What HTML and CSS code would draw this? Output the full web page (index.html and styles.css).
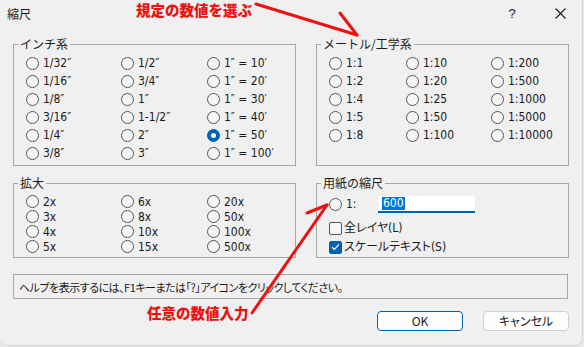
FILE: index.html
```html
<!DOCTYPE html>
<html lang="ja">
<head>
<meta charset="utf-8">
<title>縮尺</title>
<link rel="stylesheet" href="styles.css">
</head>
<body>
<div class="window">
  <div class="titlebar">
    <span class="title">縮尺</span>
    <span class="tb-help">?</span>
    <span class="tb-close"><svg width="11" height="11" viewBox="0 0 11 11"><path d="M0.5 0.5L10.5 10.5M10.5 0.5L0.5 10.5" stroke="#1a1a1a" stroke-width="1.1" fill="none"/></svg></span>
  </div>
  <div class="content">
    <div class="groups">
      <fieldset class="group">
        <legend>インチ系</legend>
        <div class="opts inch">
          <label class="opt"><span class="radio"></span><span class="lbl">1/32″</span></label>
          <label class="opt"><span class="radio"></span><span class="lbl">1/16″</span></label>
          <label class="opt"><span class="radio"></span><span class="lbl">1/8″</span></label>
          <label class="opt"><span class="radio"></span><span class="lbl">3/16″</span></label>
          <label class="opt"><span class="radio"></span><span class="lbl">1/4″</span></label>
          <label class="opt"><span class="radio"></span><span class="lbl">3/8″</span></label>
          <label class="opt"><span class="radio"></span><span class="lbl">1/2″</span></label>
          <label class="opt"><span class="radio"></span><span class="lbl">3/4″</span></label>
          <label class="opt"><span class="radio"></span><span class="lbl">1″</span></label>
          <label class="opt"><span class="radio"></span><span class="lbl">1-1/2″</span></label>
          <label class="opt"><span class="radio"></span><span class="lbl">2″</span></label>
          <label class="opt"><span class="radio"></span><span class="lbl">3″</span></label>
          <label class="opt"><span class="radio"></span><span class="lbl">1″ = 10′</span></label>
          <label class="opt"><span class="radio"></span><span class="lbl">1″ = 20′</span></label>
          <label class="opt"><span class="radio"></span><span class="lbl">1″ = 30′</span></label>
          <label class="opt"><span class="radio"></span><span class="lbl">1″ = 40′</span></label>
          <label class="opt"><span class="radio checked"></span><span class="lbl">1″ = 50′</span></label>
          <label class="opt"><span class="radio"></span><span class="lbl">1″ = 100′</span></label>
        </div>
      </fieldset>
      <fieldset class="group">
        <legend>メートル/工学系</legend>
        <div class="opts metric">
          <label class="opt"><span class="radio"></span><span class="lbl">1:1</span></label>
          <label class="opt"><span class="radio"></span><span class="lbl">1:2</span></label>
          <label class="opt"><span class="radio"></span><span class="lbl">1:4</span></label>
          <label class="opt"><span class="radio"></span><span class="lbl">1:5</span></label>
          <label class="opt"><span class="radio"></span><span class="lbl">1:8</span></label>
          <label class="opt"><span class="radio"></span><span class="lbl">1:10</span></label>
          <label class="opt"><span class="radio"></span><span class="lbl">1:20</span></label>
          <label class="opt"><span class="radio"></span><span class="lbl">1:25</span></label>
          <label class="opt"><span class="radio"></span><span class="lbl">1:50</span></label>
          <label class="opt"><span class="radio"></span><span class="lbl">1:100</span></label>
          <label class="opt"><span class="radio"></span><span class="lbl">1:200</span></label>
          <label class="opt"><span class="radio"></span><span class="lbl">1:500</span></label>
          <label class="opt"><span class="radio"></span><span class="lbl">1:1000</span></label>
          <label class="opt"><span class="radio"></span><span class="lbl">1:5000</span></label>
          <label class="opt"><span class="radio"></span><span class="lbl">1:10000</span></label>
        </div>
      </fieldset>
      <fieldset class="group">
        <legend>拡大</legend>
        <div class="opts enlarge">
          <label class="opt"><span class="radio"></span><span class="lbl">2x</span></label>
          <label class="opt"><span class="radio"></span><span class="lbl">3x</span></label>
          <label class="opt"><span class="radio"></span><span class="lbl">4x</span></label>
          <label class="opt"><span class="radio"></span><span class="lbl">5x</span></label>
          <label class="opt"><span class="radio"></span><span class="lbl">6x</span></label>
          <label class="opt"><span class="radio"></span><span class="lbl">8x</span></label>
          <label class="opt"><span class="radio"></span><span class="lbl">10x</span></label>
          <label class="opt"><span class="radio"></span><span class="lbl">15x</span></label>
          <label class="opt"><span class="radio"></span><span class="lbl">20x</span></label>
          <label class="opt"><span class="radio"></span><span class="lbl">50x</span></label>
          <label class="opt"><span class="radio"></span><span class="lbl">100x</span></label>
          <label class="opt"><span class="radio"></span><span class="lbl">500x</span></label>
        </div>
      </fieldset>
      <fieldset class="group">
        <legend>用紙の縮尺</legend>
        <div class="paper">
          <div class="paper-row">
            <label class="opt"><span class="radio"></span><span class="lbl">1:</span></label>
            <span class="field"><span class="sel">600</span></span>
          </div>
          <label class="check-row first"><span class="check"></span><span class="lbl">全レイヤ(L)</span></label>
          <label class="check-row"><span class="check checked"><svg width="9" height="8" viewBox="0 0 9 8"><path d="M1 4.2L3.4 6.5L8 1.3" stroke="#fff" stroke-width="1.2" fill="none"/></svg></span><span class="lbl">スケールテキスト(S)</span></label>
        </div>
      </fieldset>
    </div>
    <div class="helpbox">ヘルプを表示するには、F1キーまたは「?」アイコンをクリックしてください。</div>
    <div class="buttons">
      <button class="btn default">OK</button>
      <button class="btn">キャンセル</button>
    </div>
  </div>
  <div class="note note-top">規定の数値を選ぶ</div>
  <div class="note note-bottom">任意の数値入力</div>
  <svg class="arrows" width="584" height="347" viewBox="0 0 584 347">
    <g stroke="#ee1111" stroke-width="3" stroke-linecap="round" fill="none">
      <path d="M256 4L357 35"/>
      <path d="M340 13L357 35"/>
      <path d="M252 313L327 205"/>
      <path d="M307 213L327 205"/>
    </g>
  </svg>
</div>
</body>
</html>
```

FILE: styles.css
```css
* { box-sizing: border-box; }
html, body { margin: 0; padding: 0; }
body {
  width: 584px;
  height: 347px;
  background: #e9e9e9;
  font-family: "Noto Sans CJK JP", sans-serif;
  font-size: 12px;
  color: #1a1a1a;
  overflow: hidden;
}
.window {
  position: relative;
  width: 583px;
  height: 346px;
  background: #f0f0f0;
  border-bottom-right-radius: 8px;
  border-bottom-left-radius: 8px;
  border-right: 1px solid #d6d6d6;
  border-bottom: 1px solid #d6d6d6;
}
.titlebar {
  height: 30px;
  display: flex;
  align-items: center;
  padding-left: 7px;
}
.title {
  font-size: 12px;
  line-height: 14px;
  margin-top: -2px;
}
.tb-help {
  margin-left: auto;
  font-family: "Liberation Sans", sans-serif;
  font-size: 13px;
  width: 14px;
  text-align: center;
  margin-right: 36px;
  margin-top: -3px;
}
.tb-close {
  display: flex;
  width: 11px;
  height: 11px;
  margin-right: 16px;
  margin-top: -4px;
}
.content {
  padding: 7px 0 0 13px;
}
.groups {
  display: grid;
  grid-template-columns: 283px 253px;
  column-gap: 20px;
  row-gap: 10px;
}
.group {
  margin: 0;
  padding: 0;
  min-width: 0;
  border: 1px solid #a7a7a7;
}
.group legend {
  padding: 0 2px;
  margin-left: 4px;
  line-height: 14px;
  font-size: 12px;
}
.opts {
  display: grid;
  grid-auto-flow: column;
  padding: 3px 0 3px 12px;
}
.opts.inch {
  grid-template-rows: repeat(6, 18px);
  grid-template-columns: 95px 86px 1fr;
}
.opts.metric {
  grid-template-rows: repeat(5, 18px);
  grid-template-columns: 77px 85px 1fr;
}
.opts.enlarge {
  padding: 4px 0 3px 12px;
  grid-template-rows: repeat(4, 15px);
  grid-template-columns: 95px 86px 1fr;
}
.opt {
  display: flex;
  align-items: center;
  gap: 4px;
}
.lbl {
  font-family: "Liberation Sans Narrow", "DejaVu Sans Condensed", "Noto Sans CJK JP", sans-serif;
  font-size: 12px;
  line-height: 14px;
  font-feature-settings: "palt";
  white-space: pre;
}
.radio {
  width: 13px;
  height: 13px;
  border-radius: 50%;
  border: 1px solid #555;
  background: #f6f6f6;
  flex: none;
  display: flex;
  align-items: center;
  justify-content: center;
}
.radio.checked {
  background: #0063b1;
  border-color: #0063b1;
}
.radio.checked::after {
  content: "";
  width: 5px;
  height: 5px;
  border-radius: 50%;
  background: #fff;
}
.paper {
  padding: 5px 0 0 12px;
  display: flex;
  flex-direction: column;
}
.paper-row {
  display: flex;
  align-items: center;
  height: 18px;
}
.paper-row .opt {
  width: 49px;
}
.field {
  width: 97px;
  height: 17px;
  background: #fff;
  border-bottom: 2px solid #0063b1;
  padding: 1px 0 0 4px;
  display: flex;
  align-items: center;
}
.sel {
  background: #0078d7;
  color: #fff;
  font-family: "Liberation Sans Narrow", "DejaVu Sans Condensed", sans-serif;
  font-size: 12px;
  line-height: 13px;
  padding: 0 1px;
}
.check-row {
  display: flex;
  align-items: center;
  gap: 2px;
  height: 16px;
  margin-top: 3px;
}
.check-row.first { margin-top: 7px; }
.check {
  width: 13px;
  height: 13px;
  border: 1px solid #555;
  border-radius: 2px;
  background: #f6f6f6;
  flex: none;
  display: flex;
  align-items: center;
  justify-content: center;
}
.check.checked {
  background: #0063b1;
  border-color: #0063b1;
}
.helpbox {
  margin-top: 16px;
  width: 555px;
  height: 25px;
  border: 1px solid #a7a7a7;
  padding-left: 5px;
  display: flex;
  align-items: center;
  font-size: 11px;
  letter-spacing: -0.5px;
  font-feature-settings: "palt";
  white-space: nowrap;
}
.buttons {
  margin-top: 12px;
  width: 556px;
  display: flex;
  justify-content: flex-end;
  gap: 20px;
}
.btn {
  width: 86px;
  height: 20px;
  padding: 0;
  background: #fdfdfd;
  border: 1px solid #d0d0d0;
  border-radius: 4px;
  font-family: "Noto Sans CJK JP", sans-serif;
  font-size: 12px;
  font-feature-settings: "palt";
  color: #1a1a1a;
  line-height: 16px;
}
.btn.default {
  border: 1.5px solid #0063b1;
}
.note {
  position: absolute;
  color: #ee1111;
  font-weight: 900;
  font-size: 14.5px;
  line-height: 16px;
  white-space: nowrap;
}
.note-top { left: 136px; top: 2px; }
.note-bottom { left: 147px; top: 305px; }
.arrows {
  position: absolute;
  left: 0;
  top: 0;
  pointer-events: none;
}
```
